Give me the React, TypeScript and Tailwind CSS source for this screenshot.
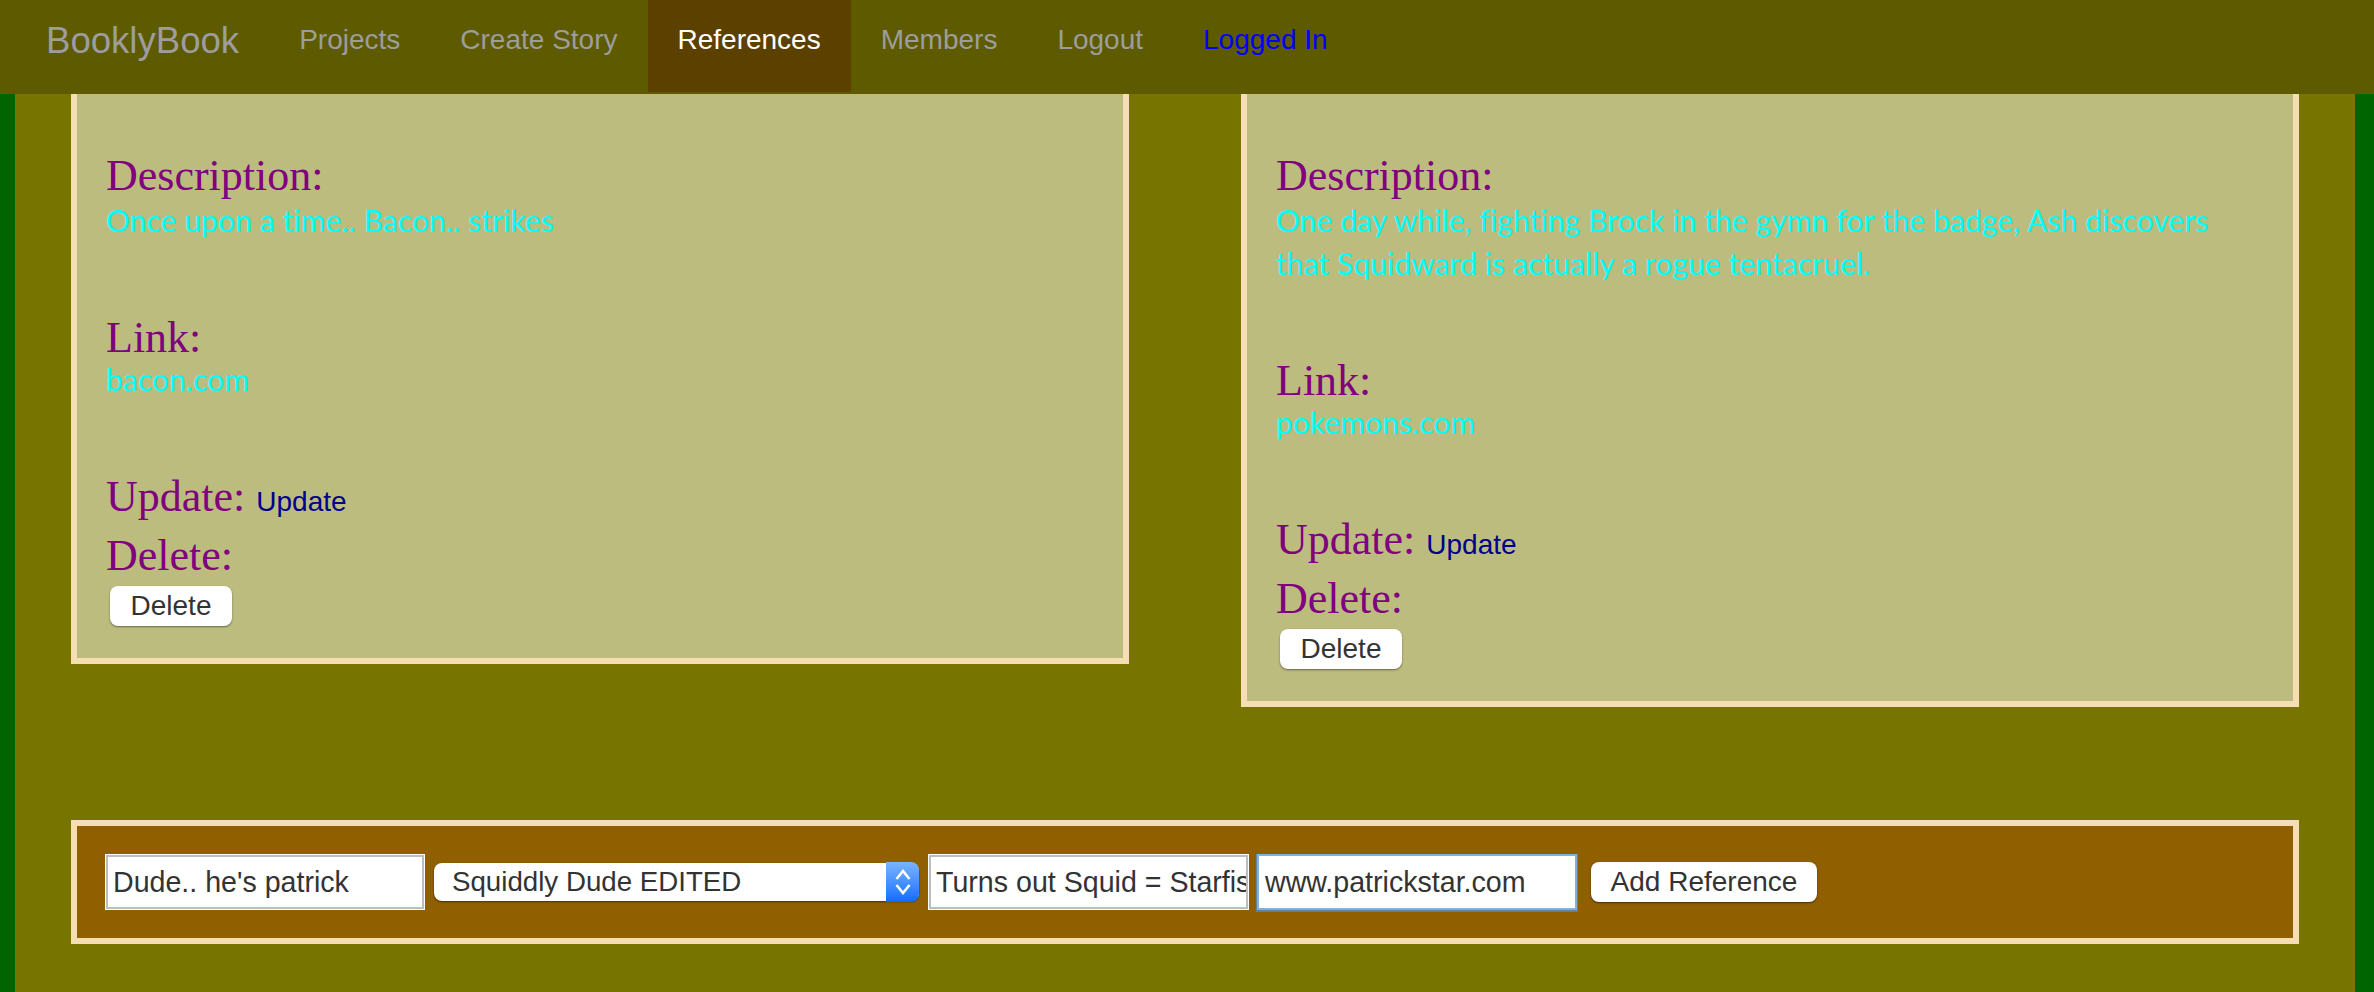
const navLinks = [
  { label: 'Projects', className: 'text-[#9d9d9d]' },
  { label: 'Create Story', className: 'text-[#9d9d9d]' },
  { label: 'References', className: 'text-white bg-[#5c4000]' },
  { label: 'Members', className: 'text-[#9d9d9d]' },
  { label: 'Logout', className: 'text-[#9d9d9d]' },
  { label: 'Logged In', className: 'text-[#0000ff]' },
];

const references = [
  {
    description: 'Once upon a time.. Bacon.. strikes',
    link: 'bacon.com',
  },
  {
    description: 'One day while, fighting Brock in the gymn for the badge, Ash discovers that Squidward is actually a rogue tentacruel.',
    link: 'pokemons.com',
  },
];

function Label({ children, className = '' }: { children: string; className?: string }) {
  return (
    <div className={`font-['Liberation_Serif',serif] text-[44px] leading-[40px] text-[#800080] ${className}`}>
      {children}
    </div>
  );
}

function Value({ children }: { children: string }) {
  return (
    <p className="max-w-[960px] font-['Lato',sans-serif] font-normal text-[30px] leading-[43px] tracking-[0.1px] text-[#00ffff]">
      {children}
    </p>
  );
}

function ReferenceCard({ description, link }: { description: string; link: string }) {
  return (
    <div className="border-x-[6px] border-b-[6px] border-[#f5deb3] bg-[#bcbc7f] px-[29px] pt-[62px] pb-[32px]">
      <Label>Description:</Label>
      <div className="mt-[3px]">
        <Value>{description}</Value>
      </div>
      <Label className="mt-[76px]">Link:</Label>
      <Value>{link}</Value>
      <div className="mt-[76px] flex items-baseline gap-[11px]">
        <Label>Update:</Label>
        <a className="font-['Liberation_Sans',sans-serif] text-[28px] text-[#00008b]">Update</a>
      </div>
      <Label className="mt-[13px]">Delete:</Label>
      <button className="ml-[4px] mt-[10px] block h-[40px] w-[122px] rounded-[8px] bg-white font-['Liberation_Sans',sans-serif] text-[28px] leading-[40px] text-[#333333] shadow-[0_1px_2px_rgba(0,0,0,0.45)]">
        Delete
      </button>
    </div>
  );
}

export default function App() {
  return (
    <div className="flex min-h-[992px] flex-col overflow-hidden bg-[#787400] font-['Liberation_Sans',sans-serif]">
      <nav className="flex h-[94px] items-start bg-[#5e5a00] pl-[46px]">
        <a className="mr-[30px] pt-[21px] text-[36.6px] leading-[40px] text-[#9d9d9d]">BooklyBook</a>
        {navLinks.map((item) => (
          <a key={item.label} className={`h-[92px] px-[30px] pt-[20px] text-[28px] leading-[40px] ${item.className}`}>
            {item.label}
          </a>
        ))}
      </nav>

      <main className="flex flex-1 flex-col border-l-[15px] border-r-[19px] border-[#006400] px-[56px]">
        <div className="grid grid-cols-2 items-start gap-[112px]">
          {references.map((item) => (
            <ReferenceCard key={item.link} {...item} />
          ))}
        </div>

        <form className="mt-[113px] flex items-center border-[6px] border-[#f5deb3] bg-[#8f5f00] py-[28px] pl-[28px] text-[28px] text-[#333333]">
          <input
            readOnly
            defaultValue="Dude.. he's patrick"
            className="ml-[1px] h-[54px] w-[318px] border-2 border-[#bdbdbd] bg-white pl-[5px] pr-[2px] text-[28.6px] shadow-[0_0_0_1px_white] outline-none"
          />
          <div className="ml-[10px] flex h-[38px] w-[485px] items-center justify-between rounded-[8px] bg-white pl-[18px] text-[27.7px] shadow-[0_1px_2px_rgba(0,0,0,0.5)]">
            <span>Squiddly Dude EDITED</span>
            <span className="flex h-[40px] w-[33px] items-center justify-center rounded-r-[8px] bg-gradient-to-b from-[#78b4ff] to-[#0a6cff]">
              <svg width="18" height="30" viewBox="0 0 18 30" fill="none" stroke="white" strokeWidth="2.6">
                <path d="M2.5 12 L9 4 L15.5 12" />
                <path d="M2.5 18 L9 26 L15.5 18" />
              </svg>
            </span>
          </div>
          <input
            readOnly
            defaultValue="Turns out Squid = Starfish"
            className="ml-[10px] h-[54px] w-[319px] border-2 border-[#bdbdbd] bg-white pl-[5px] pr-0 text-[28.6px] shadow-[0_0_0_1px_white] outline-none"
          />
          <input
            readOnly
            defaultValue="www.patrickstar.com"
            className="ml-[9px] h-[56px] w-[320px] border-2 border-[#7eb0e0] bg-white px-[6px] text-[28.6px] shadow-[0_1px_0_1px_#5f82a0] outline-none"
          />
          <button type="button" className="ml-[14px] h-[40px] w-[226px] rounded-[8px] bg-white leading-[40px] text-[#333333] shadow-[0_1px_2px_rgba(0,0,0,0.5)]">
            Add Reference
          </button>
        </form>
      </main>
    </div>
  );
}
